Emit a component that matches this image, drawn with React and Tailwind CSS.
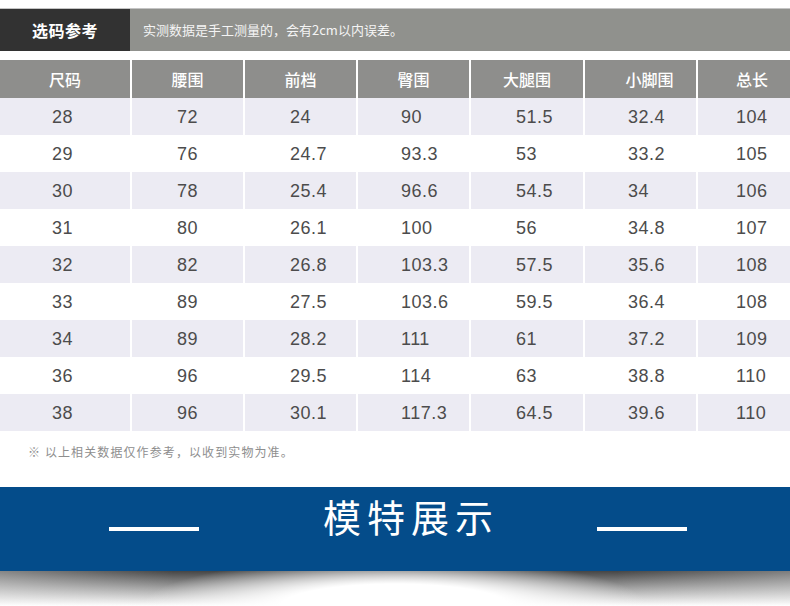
import React from "react";

const cjk = "font-['Noto_Sans_CJK_SC',sans-serif]";
const num = "font-['Liberation_Sans','Noto_Sans_CJK_SC',sans-serif]";

const headers = ["尺码", "腰围", "前档", "臀围", "大腿围", "小脚围", "总长"];
const headerPad = ["pl-0", "pl-0", "pl-0", "pl-0", "pl-0", "pl-[18px]", "pl-[16px]"];
const dataPad = ["pl-[52px]", "pl-[45px]", "pl-[45px]", "pl-[43px]", "pl-[45px]", "pl-[43px]", "pl-[38px]"];

const rows = [
  ["28", "72", "24", "90", "51.5", "32.4", "104"],
  ["29", "76", "24.7", "93.3", "53", "33.2", "105"],
  ["30", "78", "25.4", "96.6", "54.5", "34", "106"],
  ["31", "80", "26.1", "100", "56", "34.8", "107"],
  ["32", "82", "26.8", "103.3", "57.5", "35.6", "108"],
  ["33", "89", "27.5", "103.6", "59.5", "36.4", "108"],
  ["34", "89", "28.2", "111", "61", "37.2", "109"],
  ["36", "96", "29.5", "114", "63", "38.8", "110"],
  ["38", "96", "30.1", "117.3", "64.5", "39.6", "110"],
];

const cols = "grid grid-cols-[130px_111px_111px_111px_112px_111px_92px] gap-x-[2px]";

export default function App() {
  return (
    <div className="w-[790px] h-[606px] bg-white overflow-hidden flex flex-col">
      {/* title bar */}
      <div className="mt-[8px] h-[43px] flex border-t border-[#c4c4c4]">
        <div className={`w-[130px] bg-[#323232] flex items-center justify-center text-white text-[16px] font-bold tracking-[0.5px] ${cjk}`}>
          选码参考
        </div>
        <div className={`flex-1 bg-[#90918d] flex items-center pl-[13px] text-[#f4f4f4] text-[13px] ${cjk}`}>
          实测数据是手工测量的，会有2cm以内误差。
        </div>
      </div>

      {/* table header */}
      <div className={`mt-[9px] h-[38px] ${cols}`}>
        {headers.map((h, i) => (
          <div
            key={h}
            className={`bg-[#8e8e8c] flex items-center justify-center text-white text-[16px] font-medium ${headerPad[i]} ${cjk}`}
          >
            {h}
          </div>
        ))}
      </div>

      {/* data rows */}
      <div className="flex flex-col">
        {rows.map((r, ri) => (
          <div key={ri} className={`h-[37px] ${cols}`}>
            {r.map((v, ci) => (
              <div
                key={ci}
                className={`${ri % 2 === 0 ? "bg-[#ecebf3]" : "bg-white"} flex items-center pt-[1px] text-[18px] tracking-[0.5px] text-[#4c4c4c] ${dataPad[ci]} ${num}`}
              >
                {v}
              </div>
            ))}
          </div>
        ))}
      </div>

      {/* footnote */}
      <div className={`mt-[12px] pl-[28px] text-[12px] tracking-[1.1px] text-[#8e8e8e] ${cjk}`}>
        ※ 以上相关数据仅作参考，以收到实物为准。
      </div>

      {/* banner */}
      <div className="mt-[26px] h-[84px] bg-[#044c8a] flex items-center">
        <div className="ml-[109px] w-[90px] h-[4px] bg-white" />
        <div className={`ml-[124px] mb-[26px] text-white text-[38px] leading-none tracking-[6px] ${cjk}`}>
          模特展示
        </div>
        <div className="ml-[98px] w-[90px] h-[4px] bg-white" />
      </div>

      {/* shadow */}
      <div className="flex-1 bg-[radial-gradient(ellipse_32%_140%_at_50%_100%,#ffffff_45%,rgba(255,255,255,0)_100%),linear-gradient(to_right,rgba(255,255,255,0.35),rgba(255,255,255,0)_22%,rgba(255,255,255,0)_78%,rgba(255,255,255,0.3)),linear-gradient(to_bottom,#454545_0%,#9a9a9a_45%,#ffffff_100%)]" />
    </div>
  );
}
